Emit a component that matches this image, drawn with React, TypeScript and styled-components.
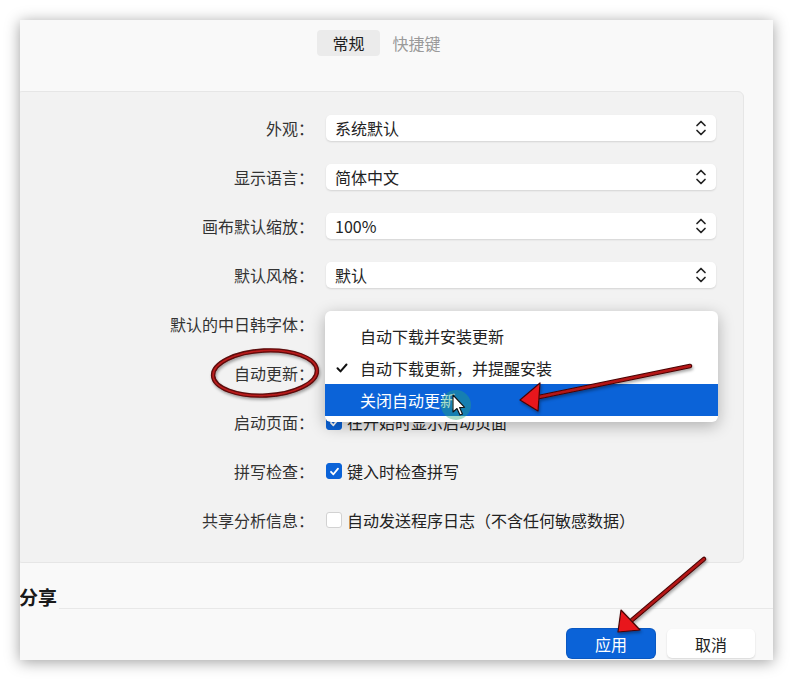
import React from "react";
import styled, { createGlobalStyle } from "styled-components";

const Global = createGlobalStyle`
  html, body { margin: 0; padding: 0; background: #ffffff; }
  body { font-family: "Noto Sans CJK SC", "Noto Sans", sans-serif; color: #222; }
`;

const Page = styled.div`
  position: relative;
  width: 793px;
  height: 680px;
  padding: 20px 20px 0 20px;
  box-sizing: border-box;
`;

const Window = styled.div`
  width: 753px;
  height: 640px;
  background: #f9f9f9;
  box-shadow: 0 2px 14px rgba(0, 0, 0, 0.38);
  overflow: hidden;
`;

const Inner = styled.div`
  width: 786px;
  margin-left: -33px;
  display: flex;
  flex-direction: column;
`;

const Tabs = styled.div`
  display: flex;
  justify-content: center;
  padding: 10px 0 0 11px;
  height: 26px;
`;

const Tab = styled.div<{ $active?: boolean }>`
  height: 26px;
  padding: 0 ${(p) => (p.$active ? 15 : 13)}px;
  display: flex;
  align-items: center;
  font-size: 16px;
  border-radius: 4px;
  background: ${(p) => (p.$active ? "#ebebeb" : "transparent")};
  color: ${(p) => (p.$active ? "#1e1e1e" : "#9a9a9a")};
`;

const Panel = styled.div`
  margin: 35px 29px 0 29px;
  background: #f2f2f2;
  border: 1px solid #e6e6e6;
  border-radius: 6px;
  padding: 23px 27px 29px 0;
  display: flex;
  flex-direction: column;
  gap: 23px;
`;

const Row = styled.div`
  position: relative;
  display: grid;
  grid-template-columns: 297px 1fr;
  column-gap: 12px;
  align-items: center;
  height: 26px;
`;

const Label = styled.div`
  text-align: right;
  font-size: 16px;
  color: #333;
  white-space: nowrap;
`;

const Select = styled.div`
  height: 26px;
  background: #fff;
  border-radius: 5px;
  box-shadow: 0 1px 2px rgba(0, 0, 0, 0.13);
  display: flex;
  align-items: center;
  justify-content: space-between;
  padding: 0 9px 0 9px;
  font-size: 16px;
  color: #222;
`;

const CheckLine = styled.div`
  display: flex;
  align-items: center;
  gap: 5px;
  font-size: 16px;
  color: #222;
`;

const Box = styled.span<{ $checked?: boolean }>`
  width: 16px;
  height: 16px;
  box-sizing: border-box;
  border-radius: 3px;
  display: inline-flex;
  align-items: center;
  justify-content: center;
  background: ${(p) => (p.$checked ? "#0b63d8" : "#fff")};
  border: 1px solid ${(p) => (p.$checked ? "#0b63d8" : "#d2d2d2")};
`;

const Menu = styled.div`
  position: absolute;
  left: 308px;
  top: -49px;
  width: 393px;
  background: #fff;
  border-radius: 6px;
  box-shadow: 0 4px 16px rgba(0, 0, 0, 0.28);
  padding: 9px 0 6px 0;
  z-index: 2;
  overflow: hidden;
`;

const MenuItem = styled.div<{ $active?: boolean }>`
  height: 32px;
  display: flex;
  align-items: center;
  position: relative;
  padding-left: 35px;
  font-size: 16px;
  color: ${(p) => (p.$active ? "#fff" : "#222")};
  background: ${(p) => (p.$active ? "#0b63d8" : "transparent")};
`;

const Tick = styled.span`
  position: absolute;
  left: 11px;
  top: 11px;
  display: flex;
`;

const Footer = styled.div`
  display: flex;
  align-items: flex-end;
  margin-top: 22px;
  padding-left: 32px;
  height: 24px;
`;

const Heading = styled.div`
  font-size: 19px;
  font-weight: 700;
  line-height: 24px;
  color: #1a1a1a;
`;

const Rule = styled.div`
  flex: 1;
  border-bottom: 1px solid #e8e8e8;
  margin-left: 2px;
`;

const Buttons = styled.div`
  display: flex;
  justify-content: flex-end;
  gap: 12px;
  padding-right: 18px;
  margin-top: 20px;
`;

const Button = styled.div<{ $primary?: boolean }>`
  width: 88px;
  height: 29px;
  border-radius: 5px;
  display: flex;
  align-items: center;
  justify-content: center;
  font-size: 16px;
  background: ${(p) => (p.$primary ? "#0b63d8" : "#fff")};
  color: ${(p) => (p.$primary ? "#fff" : "#222")};
  box-shadow: ${(p) =>
    p.$primary ? "0 0 0 1px #0a58c2" : "0 1px 2px rgba(0,0,0,0.14)"};
`;

const Overlay = styled.svg`
  position: absolute;
  left: 0;
  top: 0;
  pointer-events: none;
  z-index: 5;
`;

const Chevrons = () => (
  <svg width="12" height="18" viewBox="0 0 12 18">
    <path d="M2 6.5 L6 2.5 L10 6.5" fill="none" stroke="#222" strokeWidth="1.7" strokeLinecap="round" strokeLinejoin="round" />
    <path d="M2 11.5 L6 15.5 L10 11.5" fill="none" stroke="#222" strokeWidth="1.7" strokeLinecap="round" strokeLinejoin="round" />
  </svg>
);

const Check = ({ checked }: { checked?: boolean }) => (
  <Box $checked={checked}>
    {checked && (
      <svg width="11" height="11" viewBox="0 0 11 11">
        <path d="M2 5.8 L4.4 8.3 L9 2.6" fill="none" stroke="#fff" strokeWidth="1.8" strokeLinecap="round" strokeLinejoin="round" />
      </svg>
    )}
  </Box>
);

const SelectField = ({ value }: { value: string }) => (
  <Select>
    <span>{value}</span>
    <Chevrons />
  </Select>
);

const Arrow = ({ tail, shaftEnd, head }: { tail: [number, number]; shaftEnd: [number, number]; head: string }) => (
  <g>
    <line x1={tail[0]} y1={tail[1]} x2={shaftEnd[0]} y2={shaftEnd[1]} stroke="#4a0606" strokeWidth="4.6" strokeLinecap="round" />
    <line x1={tail[0]} y1={tail[1]} x2={shaftEnd[0]} y2={shaftEnd[1]} stroke="#b51616" strokeWidth="2.4" strokeLinecap="round" />
    <polygon points={head} fill="#e8161c" stroke="#4a0606" strokeWidth="1.2" strokeLinejoin="round" />
  </g>
);

export default function App() {
  return (
    <Page>
      <Global />
      <Window>
        <Inner>
          <Tabs>
            <Tab $active>常规</Tab>
            <Tab>快捷键</Tab>
          </Tabs>
          <Panel>
            <Row>
              <Label>外观：</Label>
              <SelectField value="系统默认" />
            </Row>
            <Row>
              <Label>显示语言：</Label>
              <SelectField value="简体中文" />
            </Row>
            <Row>
              <Label>画布默认缩放：</Label>
              <SelectField value="100%" />
            </Row>
            <Row>
              <Label>默认风格：</Label>
              <SelectField value="默认" />
            </Row>
            <Row>
              <Label>默认的中日韩字体：</Label>
              <SelectField value="" />
            </Row>
            <Row>
              <Label>自动更新：</Label>
              <SelectField value="" />
              <Menu>
                <MenuItem>自动下载并安装更新</MenuItem>
                <MenuItem>
                  <Tick>
                    <svg width="12" height="10" viewBox="0 0 12 10">
                      <path d="M1.5 5.2 L4.5 8.4 L10.5 1.5" fill="none" stroke="#111" strokeWidth="2" strokeLinecap="round" strokeLinejoin="round" />
                    </svg>
                  </Tick>
                  自动下载更新，并提醒安装
                </MenuItem>
                <MenuItem $active>关闭自动更新</MenuItem>
              </Menu>
            </Row>
            <Row>
              <Label>启动页面：</Label>
              <CheckLine>
                <Check checked />
                在开始时显示启动页面
              </CheckLine>
            </Row>
            <Row>
              <Label>拼写检查：</Label>
              <CheckLine>
                <Check checked />
                键入时检查拼写
              </CheckLine>
            </Row>
            <Row>
              <Label>共享分析信息：</Label>
              <CheckLine>
                <Check />
                自动发送程序日志（不含任何敏感数据）
              </CheckLine>
            </Row>
          </Panel>
          <Footer>
            <Heading>分享</Heading>
            <Rule />
          </Footer>
          <Buttons>
            <Button $primary>应用</Button>
            <Button>取消</Button>
          </Buttons>
        </Inner>
      </Window>
      <Overlay width="793" height="680" viewBox="0 0 793 680">
        <defs>
          <filter id="sh" x="-20%" y="-20%" width="140%" height="140%">
            <feDropShadow dx="1" dy="2" stdDeviation="1.5" floodColor="#000" floodOpacity="0.35" />
          </filter>
        </defs>
        <g filter="url(#sh)">
          <ellipse cx="265" cy="373" rx="52" ry="22.5" fill="none" stroke="#5a0808" strokeWidth="4.4" transform="rotate(-3 265 373)" />
          <ellipse cx="265" cy="373" rx="52" ry="22.5" fill="none" stroke="#b81c1c" strokeWidth="1.8" transform="rotate(-3 265 373)" />
          <Arrow tail={[690, 366]} shaftEnd={[534, 398]} head="520,400 540,383 538,411" />
          <Arrow tail={[704, 559]} shaftEnd={[632, 620]} head="618,632 621,610 640,630" />
        </g>
        <circle cx="456" cy="405" r="15" fill="rgba(40,170,120,0.4)" />
        <path
          d="M453 395 L453 412 L457 408.5 L460 415 L462.5 414 L459.6 407.6 L464.6 407.3 Z"
          fill="#fff"
          stroke="#111"
          strokeWidth="1.1"
          strokeLinejoin="round"
        />
      </Overlay>
    </Page>
  );
}
